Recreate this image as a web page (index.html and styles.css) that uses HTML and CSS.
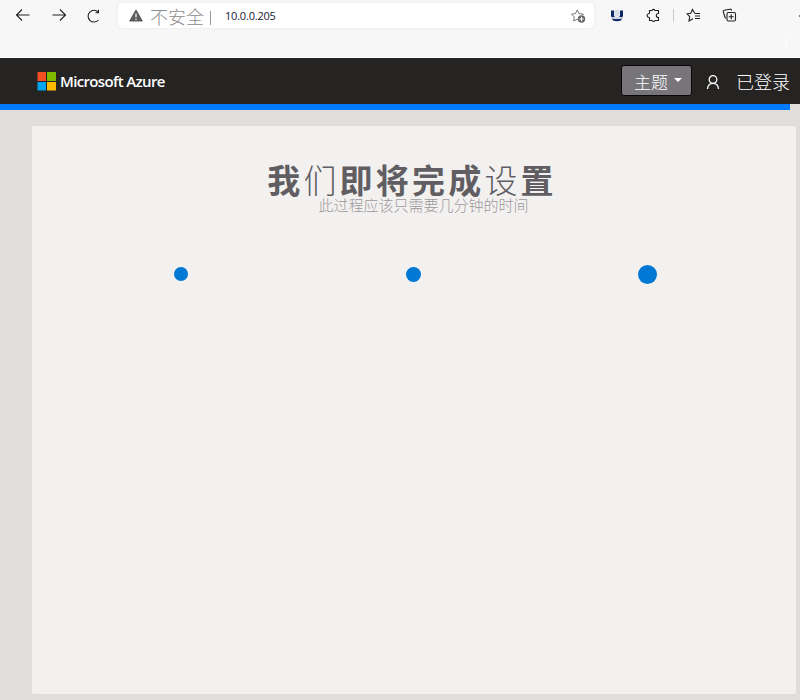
FILE: index.html
```html
<!DOCTYPE html>
<html lang="zh-CN">
<head>
<meta charset="utf-8">
<title>Microsoft Azure</title>
<link rel="stylesheet" href="styles.css">
</head>
<body>
<div class="browser">
  <svg class="nav back" width="16" height="14" viewBox="0 0 16 14"><path d="M7 1.500L1.500 7L7 12.500M1.500 7H14.500"/></svg>
  <svg class="nav fwd" width="16" height="14" viewBox="0 0 16 14"><path d="M9 1.500L14.500 7L9 12.500M14.500 7H1.500"/></svg>
  <svg class="nav reload" width="14" height="14" viewBox="0 0 14 14"><path d="M11.500 .8v3H8.500M11.200 3A5.900 5.900 0 1 0 11.500 11"/></svg>
  <div class="address">
    <svg class="warn" width="14" height="14" viewBox="0 0 14 14"><path d="M7 1L13.300 12H.7Z" fill="#5c5c5c" stroke="#5c5c5c" stroke-linejoin="round"/><path d="M7 4.500v4M7 9.700v1.300" stroke="#fff" stroke-width="1.200"/></svg>
    <span class="insecure">不安全</span>
    <span class="bar"></span>
    <span class="url">10.0.0.205</span>
    <svg class="star" width="16" height="16" viewBox="0 0 16 16"><path d="M8 12L7.200 11.300L3.700 13L4.300 9L1.500 6.200L5.400 5.600L7.200 2L9 5.600L13.500 6.200L12.500 7.200" fill="none" stroke="#777"/><circle cx="11.500" cy="11" r="3.700" fill="#666"/><path d="M11.500 8.800v4.400M9.300 11h4.400" stroke="#fff"/></svg>
  </div>
  <svg class="ext" width="14" height="14" viewBox="0 0 14 14"><path d="M1 1.500h3v5Q4 8 7 8T10 6.500v-5h3V7q0 1-1 1H2Q1 8 1 7Z" fill="#0b2a63"/><path d="M4.500 1h5v5.500q-2.500 1.500-5 0Z" fill="#d3dce5"/><path d="M1 8h12v1.500H1Z" fill="#c4cfdb"/><path d="M2 9.500q5 1 10 0l-1 2q-4 1.500-8 0Z" fill="#0b2a63"/></svg>
  <svg class="nav puzzle" width="15" height="15" viewBox="0 0 15 15"><path d="M3.500 2.500H6Q7.500 .3 9 2.500h3.500v3Q10.300 5.500 10.300 7.500T12.500 9.500v3H9.200Q7.600 14.500 6 12.500H3.500V9.800Q1 9 1 7.500T3.500 5.200Z"/></svg>
  <span class="sep"></span>
  <svg class="nav favs" width="15" height="15" viewBox="0 0 15 15"><path d="M8.500 5L6.500 1.500L4.700 5.200L1 5.800L3.700 8.600L3 13L7 10.700M8.500 5.500H14M9 8h5M9 10.500h5"/></svg>
  <svg class="nav coll" width="15" height="15" viewBox="0 0 15 15"><path d="M3.500 10.500L1.300 4Q1 2.500 2.300 2.200L8 1.200Q9.300 1 9.700 2.500"/><rect x="5" y="4.500" width="8.500" height="8.500" rx="1.500"/><path d="M9.250 6.200v5M6.750 8.700h5"/></svg>
  <span class="tick"></span>
  <span class="more"></span>
</div>
<header class="top">
  <svg class="logo" width="19" height="19" viewBox="0 0 19 19"><path d="M.5 0H9v9H.5Z" fill="#f25022"/><path d="M10 0h9v9h-9Z" fill="#7fba00"/><path d="M.5 10H9v8.500H.5Z" fill="#00a4ef"/><path d="M10 10h9v8.500h-9Z" fill="#ffb900"/></svg>
  <span class="brand">Microsoft Azure</span>
  <button class="theme"><span>主题</span><i class="caret"></i></button>
  <svg class="user" width="14" height="16" viewBox="0 0 14 16"><circle cx="7" cy="5.500" r="3.800"/><path d="M1.500 15Q2 9.300 7 9.300T12.500 15"/></svg>
  <span class="signed">已登录</span>
</header>
<div class="track"><div class="progress"></div></div>
<main class="panel">
  <h1>我<span class="thin">们</span>即将完成<span class="thin">设</span>置</h1>
  <p>此过程应该只需要几分钟的时间</p>
  <div class="dots"><span><i class="d1"></i></span><span><i class="d2"></i></span><span><i class="d3"></i></span></div>
</main>
</body>
</html>
```
FILE: styles.css
```css
* { box-sizing: border-box; }
body { margin: 0; width: 800px; height: 700px; overflow: hidden; background: #dfdedd; font-family: "Open Sans", "Noto Sans CJK SC", sans-serif; }
svg { display: block; flex: none; }
.browser { height: 58px; background: #f7f7f7; display: flex; align-items: flex-start; padding: 3px 0 0 15px; border-bottom: 1px solid #fff; }
.nav { fill: none; stroke: #222; stroke-width: 1.100; }
.back { margin-top: 5px; }
.fwd { margin: 5px 0 0 20px; }
.reload { margin: 6px 0 0 20px; }
.address { width: 476px; height: 25px; margin-left: 17px; background: #fff; border-radius: 4px; box-shadow: 0 0 2px #ddd; display: flex; align-items: center; padding-left: 11px; }
.insecure { margin-left: 7px; font-size: 18px; line-height: 24px; font-weight: 300; color: #8c8c8c; width: 54px; white-space: nowrap; padding-top: 2px; }
.bar { width: 1px; height: 14px; margin: 5px 14px 0 6px; background: #999; }
.url { font-size: 11px; line-height: 24px; color: #171733; letter-spacing: -.2px; }
.star { margin-left: auto; margin-right: 8px; }
.ext { margin: 6px 0 0 16px; }
.puzzle { margin: 5px 0 0 22px; }
.sep { width: 1px; height: 13px; margin: 6px 12px 0 12px; background: #ccc; }
.favs { margin-top: 5px; }
.coll { margin: 5px 0 0 21px; }
.tick { width: 1px; height: 11px; margin: 33px 0 0 auto; background: #fff; }
.more { width: 1px; height: 2px; margin: 12px 0 0 12px; background: #777; }
.top { height: 46px; background: #252423; display: flex; align-items: center; padding-left: 37px; color: #fff; }
.brand { font-size: 15px; font-weight: 600; letter-spacing: -.65px; margin-left: 4px; width: 106px; white-space: nowrap; }
.theme { margin: -1px 0 0 auto; width: 71px; height: 31px; background: #77757a; border: 1px solid #050505; border-radius: 3px; display: flex; align-items: center; padding: 3px 0 0 12px; color: #fff; font: 300 17px/24px "Noto Sans CJK SC", sans-serif; white-space: nowrap; }
.caret { border: 4px solid transparent; border-top-color: #fff; border-bottom: 0; margin: -5px 0 0 6px; }
.user { margin: 1px 0 0 14px; fill: none; stroke: #fff; stroke-width: 1.300; }
.signed { margin: -1px 10px 0 16px; font-size: 18px; font-weight: 300; white-space: nowrap; }
.track { height: 6px; }
.progress { width: 790px; height: 6px; background: #007bff; }
.panel { margin: 16px 4px 0 32px; height: 568px; background: #f3f1f0; border-radius: 2px; padding-top: 37px; text-align: center; }
h1 { margin: 0; padding-right: 4px; font-size: 33px; line-height: 36px; letter-spacing: 3.200px; color: #605e62; font-weight: 700; }
.thin { font-weight: 300; }
.panel p { margin: -3px 0 0; padding-left: 19px; font-size: 15px; line-height: 18px; color: #9b999c; font-weight: 300; }
.dots { display: flex; margin: 50px 32px 0; height: 20px; }
.dots span { flex: 1; display: flex; align-items: center; justify-content: center; }
.dots i { border-radius: 50%; background: #0078d4; }
.d1 { width: 14px; height: 14px; }
.d2 { width: 15px; height: 15px; }
.d3 { width: 19px; height: 19px; }
```
